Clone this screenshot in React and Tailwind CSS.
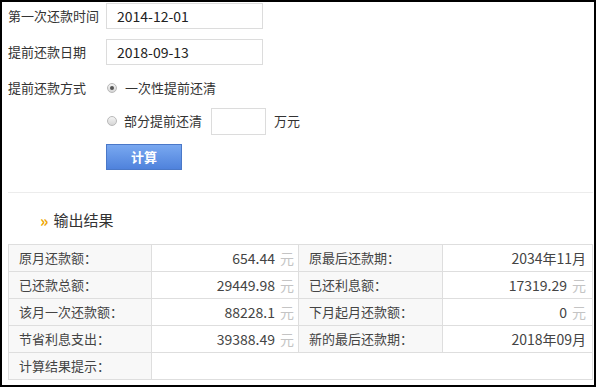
import React from "react";

const rows = [
  ["原月还款额：", "654.44", true, "原最后还款期：", "2034年11月", false],
  ["已还款总额：", "29449.98", true, "已还利息额：", "17319.29", true],
  ["该月一次还款额：", "88228.1", true, "下月起月还款额：", "0", true],
  ["节省利息支出：", "39388.49", true, "新的最后还款期：", "2018年09月", false],
];

const Value = ({ value, unit }) => (
  <div className="flex items-center justify-end h-full text-[14px] text-[#444]">
    <span>{value}</span>
    {unit && <span className="ml-[5px] text-[#c4c4c4]">元</span>}
  </div>
);

const Radio = ({ checked }) => (
  <span className="w-[10px] h-[10px] rounded-full border border-[#b9b9b9] bg-gradient-to-b from-[#f4f4f4] to-[#d6d6d6] flex items-center justify-center">
    {checked && <span className="w-[4px] h-[4px] rounded-full bg-[#555]" />}
  </span>
);

const App = () => {
  return (
    <div
      className="relative w-[596px] h-[387px] bg-white border-2 border-black overflow-hidden text-[#333]"
      style={{ fontFamily: '"Noto Sans CJK SC", "Noto Sans", sans-serif' }}
    >
      <div className="absolute -top-[2px] left-[451px] w-[118px] h-[2px] bg-white" />

      <div className="pl-[6px]">
        <div className="flex items-center h-[26px] mt-[1px]">
          <p className="w-[98px] text-[13px]">第一次还款时间</p>
          <div className="w-[157px] h-[26px] border border-[#dcdcdc] pl-[10px] flex items-center text-[14px] text-[#222]">
            2014-12-01
          </div>
        </div>
        <div className="flex items-center h-[26px] mt-[10px]">
          <p className="w-[98px] text-[13px]">提前还款日期</p>
          <div className="w-[157px] h-[26px] border border-[#dcdcdc] pl-[10px] flex items-center text-[14px] text-[#222]">
            2018-09-13
          </div>
        </div>
        <div className="flex items-center h-[26px] mt-[10px]">
          <p className="w-[98px] text-[13px]">提前还款方式</p>
          <div className="flex items-center pl-[1px]">
            <Radio checked />
            <span className="ml-[8px] text-[13px]">一次性提前还清</span>
          </div>
        </div>
        <div className="flex items-center h-[28px] mt-[6px] pl-[98px]">
          <div className="flex items-center pl-[1px]">
            <Radio />
            <span className="ml-[7px] text-[13px]">部分提前还清</span>
          </div>
          <div className="ml-[9px] w-[55px] h-[27px] border border-[#dcdcdc]" />
          <span className="ml-[8px] text-[13px]">万元</span>
        </div>
        <div className="pl-[98px] mt-[9px]">
          <button className="w-[76px] h-[26px] border border-[#4a78c8] bg-gradient-to-b from-[#79a8f0] to-[#4f82dc] text-white text-[13px] font-bold flex items-center justify-center">
            计算
          </button>
        </div>
      </div>

      <div className="ml-[6px] w-[585px] mt-[22px] h-px bg-[#ececec]" />

      <div className="flex items-center pl-[38px] mt-[17px] h-[20px]">
        <span className="text-[#eea400] text-[16px] font-bold leading-none">»</span>
        <span className="ml-[5px] text-[15px] text-[#333]">输出结果</span>
      </div>

      <table className="ml-[6px] mt-[14px] w-[584px] border-collapse text-[13px] table-fixed">
        <colgroup>
          <col className="w-[143px]" />
          <col className="w-[147px]" />
          <col className="w-[144px]" />
          <col className="w-[150px]" />
        </colgroup>
        <tbody>
          {rows.map((r) => (
            <tr key={r[0]} className="h-[27px]">
              <td className="border border-[#dedede] bg-[#f8f8f8] pl-[10px] text-[#444]">{r[0]}</td>
              <td className="border border-[#dedede] pr-[4px]">
                <Value value={r[1]} unit={r[2]} />
              </td>
              <td className="border border-[#dedede] bg-[#f8f8f8] pl-[10px] text-[#444]">{r[3]}</td>
              <td className="border border-[#dedede] pr-[6px]">
                <Value value={r[4]} unit={r[5]} />
              </td>
            </tr>
          ))}
          <tr className="h-[27px]">
            <td className="border border-[#dedede] bg-[#f8f8f8] pl-[10px] text-[#444]">计算结果提示：</td>
            <td className="border border-[#dedede]" colSpan={3} />
          </tr>
        </tbody>
      </table>
    </div>
  );
};

export default App;
